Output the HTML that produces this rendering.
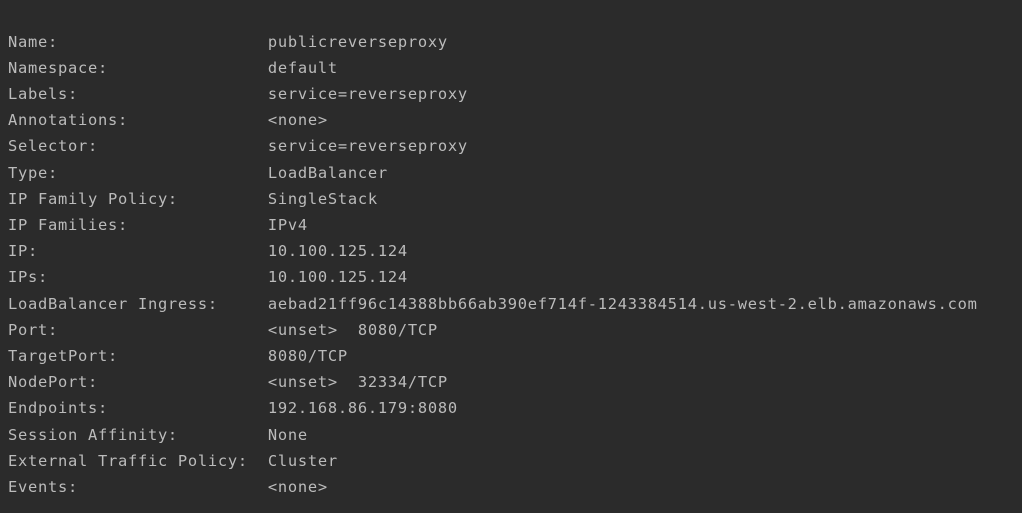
<!DOCTYPE html>
<html><head><style>
html,body{margin:0;padding:0;background:#2b2b2b;width:1022px;height:513px;overflow:hidden}
pre{margin:0;position:absolute;left:8px;top:28.5px;font-family:"DejaVu Sans Mono","Liberation Mono",monospace;font-size:15.4px;line-height:26.2px;color:#bbbbbb;letter-spacing:0.73px}
</style></head><body><pre>Name:                     publicreverseproxy
Namespace:                default
Labels:                   service=reverseproxy
Annotations:              &lt;none&gt;
Selector:                 service=reverseproxy
Type:                     LoadBalancer
IP Family Policy:         SingleStack
IP Families:              IPv4
IP:                       10.100.125.124
IPs:                      10.100.125.124
LoadBalancer Ingress:     aebad21ff96c14388bb66ab390ef714f-1243384514.us-west-2.elb.amazonaws.com
Port:                     &lt;unset&gt;  8080/TCP
TargetPort:               8080/TCP
NodePort:                 &lt;unset&gt;  32334/TCP
Endpoints:                192.168.86.179:8080
Session Affinity:         None
External Traffic Policy:  Cluster
Events:                   &lt;none&gt;</pre></body></html>
